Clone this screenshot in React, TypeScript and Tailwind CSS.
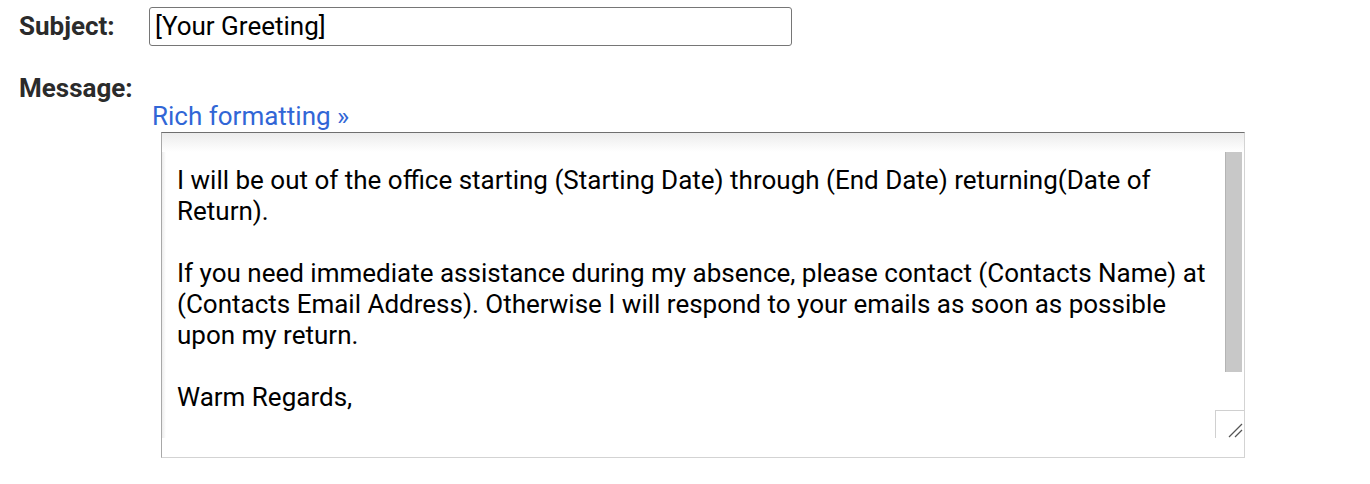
import React from "react";

const lines = [
  "I will be out of the office starting (Starting Date) through (End Date) returning(Date of",
  "Return).",
  "",
  "If you need immediate assistance during my absence, please contact (Contacts Name) at",
  "(Contacts Email Address). Otherwise I will respond to your emails as soon as possible",
  "upon my return.",
  "",
  "Warm Regards,",
];

export default function App() {
  return (
    <div
      className="w-[1370px] h-[484px] bg-white pl-[19px] pt-[7px] text-[#202124]"
      style={{ fontFamily: "Roboto, 'Liberation Sans', sans-serif" }}
    >
      <div className="flex items-center">
        <div className="w-[130px] text-[26px] font-bold text-[#2b2b2b] leading-[30px] -mt-[1px]">Subject:</div>
        <div className="w-[643px] h-[39px] border border-[#767676] rounded-[3px] flex items-center pl-[5px] text-[26px] text-black">
          [Your Greeting]
        </div>
      </div>
      <div className="mt-[29px] text-[26px] font-bold text-[#2b2b2b] leading-[26px]">Message:</div>
      <div className="ml-[133px] text-[26px] text-[#3166d6] leading-[30px]">Rich formatting »</div>
      <div className="ml-[142px] mt-[1px] relative w-[1084px] h-[326px] border border-t-[#6f6f6f] border-l-[#a8a8a8] border-r-[#d3d3d3] border-b-[#d3d3d3] bg-white flex flex-col">
        <div className="h-[19px] bg-gradient-to-b from-[#ececec] to-white" />
        <div className="flex flex-1">
          <div className="w-[4px] bg-gradient-to-r from-[#ececec] to-white" />
          <div className="flex-1 pl-[11px] pt-[13px] text-[26px] leading-[31px] text-black">
            {lines.map((l, i) => (
              <div key={i} className="whitespace-pre h-[31px]">
                {l}
              </div>
            ))}
          </div>
          <div className="w-[19px] flex flex-col">
            <div className="h-[220px] w-[17px] bg-[#c8c8c8] border-l border-[#b4b4b4]" />
          </div>
        </div>
        <div className="h-[19px]" />
        <div className="absolute right-0 bottom-[19px] w-[29px] h-[28px] border-t border-l border-[#d0d0d0] bg-white">
          <svg width="29" height="28" viewBox="0 0 29 28" className="absolute left-0 top-0">
            <line x1="13" y1="26" x2="26" y2="13" stroke="#555" strokeWidth="1.3" />
            <line x1="19" y1="26" x2="26" y2="19" stroke="#555" strokeWidth="1.3" />
          </svg>
        </div>
      </div>
    </div>
  );
}
